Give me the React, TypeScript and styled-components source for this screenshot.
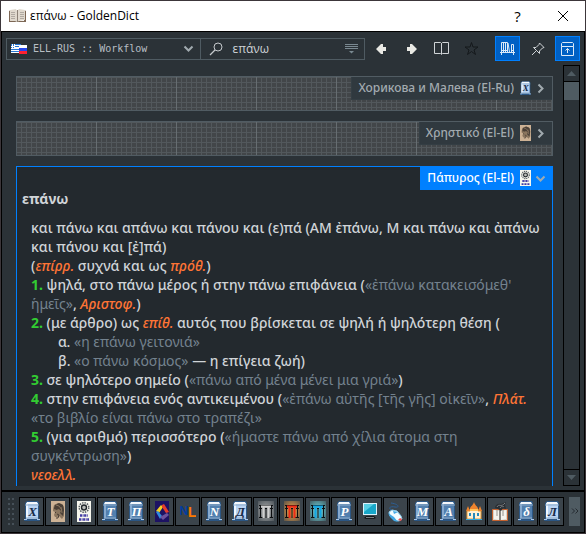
import React from "react";
import styled, { createGlobalStyle, css } from "styled-components";

const Global = createGlobalStyle`
  * { box-sizing: border-box; }
  body { margin: 0; background: #2b3237; }
  button, input, select { font: inherit; margin: 0; padding: 0; border: 0; color: inherit; background: none; border-radius: 0; }
  svg { display: block; flex: none; }
`;

const Window = styled.div`
  height: 100vh;
  display: flex;
  flex-direction: column;
  border: 1px solid #3c363a;
  background: #2b3237;
  color: #d0d4d8;
  font: 12px/16px "Open Sans", "Noto Sans", sans-serif;
`;

const TitleBar = styled.header`
  display: flex;
  align-items: center;
  height: 30px;
  flex: none;
  padding: 0 0 0 8px;
  background: #fff;
  color: #000;
`;

const Title = styled.h1`
  flex: 1;
  margin: 0 0 0 4px;
  font: inherit;
`;

const TitleButton = styled.button`
  width: 45px;
  height: 30px;
  display: grid;
  place-items: center;
  font-size: 15px;
`;

const Frame = styled.main`
  flex: 1;
  min-height: 0;
  display: flex;
  flex-direction: column;
  border: 1px solid #000;
`;

const Toolbar = styled.div`
  display: flex;
  align-items: center;
  flex: none;
  height: 33px;
  padding: 0 4px;
`;

const Field = styled.label<{ $share: number }>`
  flex: ${(p) => p.$share} 1 ${(p) => p.$share}px;
  min-width: 0;
  height: 22px;
  display: flex;
  align-items: center;
  border: 1px solid #4f5b62;
  padding: 0 6px 0 4px;
  & + & { margin-left: -1px; padding-left: 8px; }
`;

const GroupSelect = styled.select`
  flex: 1;
  min-width: 0;
  height: 18px;
  padding-left: 6px;
  appearance: none;
  outline: 0;
  color: #b7bec3;
  font: 10px/18px "DejaVu Sans Mono", monospace;
`;

const SearchInput = styled.input`
  flex: 1;
  min-width: 0;
  height: 20px;
  padding-left: 8px;
  outline: 0;
`;

const ToolButtons = styled.div`
  display: flex;
  flex: none;
  gap: 5px;
  margin-left: 4px;
`;

const ToolButton = styled.button<{ $active?: boolean }>`
  width: 25px;
  height: 25px;
  display: grid;
  place-items: center;
  border: 1px solid transparent;
  &:nth-child(5) { margin-left: 6px; }
  ${(p) => p.$active && css`
    background: #0060c4;
    border-color: #0080ff;
  `}
`;

const Workspace = styled.div`
  flex: 1;
  min-height: 0;
  display: flex;
  padding: 0 4px 4px 14px;
`;

const Articles = styled.div`
  flex: 1;
  min-width: 0;
  display: flex;
  flex-direction: column;
  gap: 10px;
  padding-top: 11px;
  overflow: hidden;
`;

const CollapsedArticle = styled.section`
  flex: none;
  height: 35px;
  display: flex;
  justify-content: flex-end;
  align-items: flex-start;
  border: 1px solid #515c63;
  background-color: #424649;
  background-image:
    linear-gradient(90deg, #666d71 1px, transparent 1px),
    linear-gradient(90deg, #52585c 1px, transparent 1px),
    linear-gradient(#52585c 1px, transparent 1px);
  background-size: 80px 80px, 5px 5px, 5px 5px;
  background-position: -1px 0, 4px 0, 0 0;
`;

const ArticleTab = styled.button<{ $open?: boolean }>`
  display: flex;
  align-items: center;
  height: 23px;
  padding: 0 6px;
  font-family: "Noto Sans", sans-serif;
  font-size: 12px;
  font-weight: 500;
  line-height: 20px;
  color: #a3abb0;
  background: #30393f;
  border: 1px solid #343e44;
  border-width: 0 0 1px 1px;
  cursor: pointer;
  & > svg:first-of-type { margin: 0 4px 0 6px; }
  ${(p) => p.$open && css`
    color: #fff;
    background: #0080ff;
    border-color: #0080ff;
  `}
`;

const OpenArticle = styled.section`
  flex: 1;
  min-height: 0;
  overflow: hidden;
  border: 1px solid #0080ff;
  border-bottom: 0;
  background: #23292e;
  font-family: "Noto Sans", sans-serif;
`;

const ArticleHeader = styled.div`
  display: flex;
  justify-content: flex-end;
`;

const Headword = styled.h2`
  margin: 0 5px;
  font-size: 14px;
  font-weight: 700;
  line-height: 17px;
`;

const ArticleBody = styled.div`
  padding: 11px 5px 0 14px;
  font-size: 14px;
  font-weight: 500;
  line-height: 19px;
`;

const Sense = styled.div<{ $sub?: boolean }>`
  margin-left: ${(p) => (p.$sub ? "27px" : "0")};
`;
const Num = styled.b`color: #32cd32;`;
const Abbr = styled.i`color: #ff7435;`;
const Quote = styled.span`
  color: #74828e;
  font-weight: 400;
`;

const ScrollBar = styled.div`
  width: 17px;
  flex: none;
  margin-left: 10px;
  display: flex;
  flex-direction: column;
  border: 1px solid #000;
`;

const ScrollButton = styled.button`
  height: 16px;
  flex: none;
  display: grid;
  place-items: center;
  &:first-child { border-bottom: 1px solid #000; }
  &:last-child { border-top: 1px solid #000; }
`;

const ScrollTrack = styled.div`flex: 1;`;
const ScrollThumb = styled.div`
  height: 18px;
  background: #4f5b62;
`;

const DictBar = styled.nav`
  flex: none;
  height: 42px;
  display: flex;
  align-items: center;
  border-top: 2px solid #000;
  padding: 0 4px 2px 6px;
`;

const Grip = styled.div`
  width: 6px;
  height: 27px;
  margin-right: 5px;
  background: conic-gradient(from 270deg at 2px 2px, #465058 90deg, transparent 0) 0 0 / 4px 5px;
`;

const DictList = styled.div`
  flex: 1;
  min-width: 0;
  display: flex;
  gap: 1px;
  overflow: hidden;
`;

const DictButton = styled.button`
  width: 25px;
  height: 29px;
  flex: none;
  display: grid;
  place-items: center;
  border: 1px solid #000;
  background: #3b444b;
`;

const MoreButton = styled.button`
  width: 11px;
  height: 29px;
  display: grid;
  place-items: center;
  background: #4f5b62;
`;

const BookIcon = ({ letter, light, small }: { letter: string; light?: boolean; small?: boolean }) => (
  <svg width={small ? 11 : 16} height={small ? 14 : 20} viewBox="0 0 16 20" aria-hidden="true">
    <path d="M1 2l2-2h11l1 2v16l1 2H0l1-2z" fill="#2b5684" />
    <path d="M2 2h12v16H2z" fill={light ? "#b9d3f2" : "#527fae"} />
    <path d="M2 3h2v14H2z" fill={light ? "#edf6ff" : "#86a9ce"} />
    <path d="M3 1h10l1 2H2z" fill="#f4f7fb" />
    <path d="M1 4h14M2 17h12" stroke="#8eacc9" />
    <path d="M0 18h3v1H0zm13 0h3v1h-3z" fill="#a9c7e9" />
    <text x="8.5" y="15" textAnchor="middle" fontFamily="Liberation Serif, serif" fontStyle="italic" fontWeight="700" fontSize="13" fill={light ? "#172b48" : "#fff"}>{letter}</text>
  </svg>
);

const PortraitIcon = ({ small }: { small?: boolean }) => (
  <svg width={small ? 11 : 14} height={small ? 16 : 21} viewBox="0 0 14 21" preserveAspectRatio="none" aria-hidden="true">
    <path d="M0 0h14v21H0z" fill="#cdb295" />
    <path d="M2 8l1-4 4-2 4 1 2 3v9l-2 3-3-3-2 1H4l-1-2 1-3-2-1z" fill="#8b765f" />
    <path d="M4 4l4-2 4 2 1 5-1 6-3-3 1-2-2-2-3 1-2-2z" fill="#4a4037" />
    <path d="M3 8l3-2 3 2M4 11l1 1M6 13l2 1-1 3H5" stroke="#4a3e35" fill="none" />
    <path d="M5 4l3 1 3 4M10 6l1 6" stroke="#8a755f" fill="none" />
  </svg>
);

const PapyrusIcon = ({ small }: { small?: boolean }) => (
  <svg width={small ? 11 : 14} height={small ? 16 : 21} viewBox="0 0 14 21" preserveAspectRatio="none" aria-hidden="true">
    <path d="M0 0h14v21H0z" fill="#f7f7ef" />
    <circle cx="7" cy="6.5" r="4.800" fill="none" stroke="#5a6064" strokeWidth="1.500" strokeDasharray="1.500 1" />
    <circle cx="7" cy="6.5" r="2.500" fill="#b9bcb8" stroke="#20262a" strokeWidth="1.400" />
    <path d="M3 14.500h8M2 18.500h10" stroke="#433ca5" strokeWidth="2.500" strokeDasharray="2 .6 1 .5" />
  </svg>
);

const GateIcon = ({ id, color, glow }: { id: string; color: string; glow: string }) => (
  <svg width="16" height="21" viewBox="0 0 16 21" aria-hidden="true">
    <radialGradient id={id} r=".75">
      <stop offset=".3" stopColor={glow} />
      <stop offset="1" stopColor={glow} stopOpacity=".15" />
    </radialGradient>
    <path d="M0 0h16v20H0z" fill={`url(#${id})`} />
    <path d="M1 4.500h14M1 7.500h3M12 7.500h3M2.500 4v13M13.500 4v13M1 16.500h4M11 16.500h4M8 8v9" stroke="#0c0e10" fill="none" />
    <path d="M3 5.500h10M5.500 6v11M10.500 6v11" stroke={color} strokeWidth="2" fill="none" />
    <path d="M7 7.500h2" stroke="#0c0e10" />
  </svg>
);

const ColorIcon = () => (
  <svg width="14" height="21" viewBox="0 0 14 21" aria-hidden="true">
    <path d="M0 0h14v21H0z" fill="#1d1263" />
    <path d="M1 10l5-6 2 2-4 6z" fill="#f4cf23" />
    <path d="M7 4l2-1 5 8-3 1-4-6z" fill="#e63c2d" />
    <path d="M1 11l2-1 4 5-2 3z" fill="#2e8be0" />
    <path d="M5 16l7-4 2 2-6 5z" fill="#6c529d" />
  </svg>
);

const NLIcon = () => (
  <svg width="16" height="16" viewBox="0 0 16 16" aria-hidden="true">
    <text x="-1" y="12" fontFamily="Liberation Sans, sans-serif" fontWeight="700" fontSize="13" fill="#063c9d">N</text>
    <text x="8" y="14" fontFamily="Liberation Sans, sans-serif" fontWeight="700" fontSize="14" fill="#ff7900">L</text>
  </svg>
);

const ComputerIcon = () => (
  <svg width="14" height="17" viewBox="0 0 14 17" aria-hidden="true">
    <path d="M0 0h14v12H0z" fill="#d9f2fb" />
    <path d="M1 1h12v10H1z" fill="#18a7c9" />
    <path d="M1 1h10L1 9z" fill="#58d0e4" />
    <path d="M3 13h8l2 2-2 1H3l-2-1z" fill="#16191c" />
    <path d="M3 14.500h8" stroke="#777c80" />
  </svg>
);

const MouseIcon = () => (
  <svg width="17" height="21" viewBox="0 0 17 21" aria-hidden="true">
    <path d="M6 10C0 7 3 5 8 6s4-3-4-4" fill="none" stroke="#2c5f96" />
    <path d="M2 11l3-2 5 1 4 5 1 3-3 2-5-1-4-4z" fill="#f1fbff" stroke="#8bcbed" />
    <path d="M1 12l2 4 4 4 4 1-4-5zM6 10l1 3 4-2" fill="#43a8e4" />
    <path d="M13 17l2 1-1 2-3-1z" fill="#e95555" />
  </svg>
);

const CastleIcon = () => (
  <svg width="16" height="19" viewBox="0 0 16 19" aria-hidden="true">
    <path d="M1 9h3V7h8v2h3v8H1z" fill="#fff0d5" stroke="#e79b37" />
    <path d="M4 7c0-3 3-3 4-7 1 4 4 4 4 7zM0 9l2-5 2 5zm12 0l2-5 2 5z" fill="#ef842d" />
    <path d="M4 7h8v2H4z" fill="#ffc25c" />
    <path d="M3 11h2v3H3zm8 0h2v3h-2zm-4 0h2v6H7z" fill="#2789b9" />
    <path d="M0 17.500h16" stroke="#34a5d9" />
  </svg>
);

const OpenBookIcon = () => (
  <svg width="16" height="21" viewBox="0 0 16 21" aria-hidden="true">
    <path d="M.5 8.500h15v11h-15z" fill="#d8d2c8" stroke="#c5622f" />
    <path d="M2 9l5 1v9l-5-1zM14 9l-5 1v9l5-1z" fill="#f6f4ef" />
    <path d="M8 9v10" stroke="#3b3e40" />
    <path d="M5 9v6M11 9v6" stroke="#96938d" />
    <path d="M3 7c0-3 3-5 6-4l5-2-1 3 1 4-3-1-2 3-3-2z" fill="#2a2e32" />
    <path d="M5 6c2-4 4 1 8-4M8 7c2-3 3 0 4-2" fill="none" stroke="#7b8085" />
  </svg>
);

const AppIcon = () => (
  <svg width="17" height="14" viewBox="0 0 17 14" aria-hidden="true">
    <path d="M0 2l2-1v10h6l1 1h6V1l2 1v11H0z" fill="#7d6755" />
    <path d="M1 1l6-1 1 2 2-2 6 1v10l-6 1-2 1-2-1H1z" fill="#e0d9ce" />
    <path d="M8.500 1v12" stroke="#8c8176" />
    <path d="M2 3.500h4M2 5.500h4M2 7.500h4M2 9.500h4M11 3.500h4M11 5.500h4M11 7.500h4M11 9.500h4" stroke="#b1aaa2" />
  </svg>
);

const FlagIcon = () => (
  <svg width="16" height="12" viewBox="0 0 16 12" shapeRendering="crispEdges" aria-hidden="true">
    <path d="M0 1h10v9H0z" fill="#fff" />
    <path d="M0 1h3v4H0zM4 1h6v1H4zM4 3h6v1H4zM0 6h10v1H0zM0 8h10v1H0z" fill="#2878d4" />
    <path d="M0 3h4v1H0zM1 1h1v5H1z" fill="#fff" />
    <path d="M8 2h8v3H8z" fill="#fff" />
    <path d="M8 5h8v3H8z" fill="#2446ed" />
    <path d="M8 8h8v3H8z" fill="#ff2131" />
  </svg>
);

const Chevron = ({ right }: { right?: boolean }) => (
  <svg width="11" height="11" viewBox="0 0 11 11" aria-hidden="true">
    <path d={right ? "M3.5 1.5l4 4-4 4" : "M1.5 3.5l4 4 4-4"} stroke="#a1aaaf" strokeWidth="2" fill="none" />
  </svg>
);

const SearchIcon = () => (
  <svg width="15" height="14" viewBox="0 0 15 14" fill="none" stroke="#c5c9cc" aria-hidden="true">
    <circle cx="9" cy="5" r="4" /><path d="M6 8l-5 5" strokeWidth="1.300" />
  </svg>
);

const ListIcon = () => (
  <svg width="13" height="10" viewBox="0 0 13 10" aria-hidden="true">
    <path d="M0 .5h13M0 2.5h13M0 4.5h13" stroke="#7a8991" /><path d="M4 7h5L6.500 9.500z" fill="#7a8991" />
  </svg>
);

const Arrow = ({ right }: { right?: boolean }) => (
  <svg width="11" height="12" viewBox="0 0 11 12" aria-hidden="true">
    <path d={right ? "M11 6L6 1H4v3H1v4h3v3h2z" : "M0 6l5-5h2v3h3v4H7v3H5z"} fill="#e9e9e4" />
  </svg>
);

const ReadIcon = () => (
  <svg width="15" height="13" viewBox="0 0 15 13" fill="none" stroke="#d0d4d7" aria-hidden="true">
    <path d="M.5 .5h6l1 1 1-1h6v11h-6l-1 1-1-1h-6zM7.500 1v11" />
  </svg>
);

const StarIcon = () => (
  <svg width="15" height="15" viewBox="0 0 15 15" fill="none" stroke="#14181b" aria-hidden="true">
    <path d="M7.500 1.500L9 6h5l-4 3 1.500 4.500-4-3-4 3L5 9 1 6h5z" />
  </svg>
);

const ShelfIcon = () => (
  <svg width="15" height="13" viewBox="0 0 15 13" fill="none" stroke="#dce9f7" aria-hidden="true">
    <path d="M1.500 10V.5h6V10M3.500 .5V10M5.500 .5V10M8 1l1.500 9M11.500 10V2.500h2V10M0 10.500h15M1.500 11v2M13.500 11v2M2 8.500h5M12 8.500h1" />
  </svg>
);

const PinIcon = () => (
  <svg width="14" height="14" viewBox="0 0 14 14" fill="none" stroke="#d0d4d7" aria-hidden="true">
    <path d="M8.500 1l4.500 4.500-1.500.5-3 3v2.500l-6-6H5l3-3zM5.500 8.500L1 13" />
  </svg>
);

const PopupIcon = () => (
  <svg width="13" height="14" viewBox="0 0 13 14" fill="none" stroke="#dce9f7" aria-hidden="true">
    <path d="M.5 4.500v-3l1-1h10l1 1v3zM.5 4.500v9h12v-9M6.500 11V6.500M4.500 8.500l2-2 2 2" />
  </svg>
);

const dictionaries: { name: string; icon: React.ReactNode }[] = [
  { name: "Хорикова и Малева", icon: <BookIcon letter="X" light /> },
  { name: "Χρηστικό", icon: <PortraitIcon /> },
  { name: "Πάπυρος", icon: <PapyrusIcon /> },
  { name: "Τ", icon: <BookIcon letter="T" /> },
  { name: "Π", icon: <BookIcon letter="Π" /> },
  { name: "Color", icon: <ColorIcon /> },
  { name: "NL", icon: <NLIcon /> },
  { name: "N", icon: <BookIcon letter="N" /> },
  { name: "Д", icon: <BookIcon letter="Д" light /> },
  { name: "Π grey", icon: <GateIcon id="gate-grey" color="#d0d0d0" glow="#8f9294" /> },
  { name: "Π red", icon: <GateIcon id="gate-red" color="#f02b16" glow="#c78a45" /> },
  { name: "Π blue", icon: <GateIcon id="gate-blue" color="#13a7e5" glow="#62b4bc" /> },
  { name: "P", icon: <BookIcon letter="P" /> },
  { name: "Computer", icon: <ComputerIcon /> },
  { name: "Mouse", icon: <MouseIcon /> },
  { name: "M", icon: <BookIcon letter="M" /> },
  { name: "A", icon: <BookIcon letter="A" /> },
  { name: "Castle", icon: <CastleIcon /> },
  { name: "Open book", icon: <OpenBookIcon /> },
  { name: "δ", icon: <BookIcon letter="δ" /> },
  { name: "Л", icon: <BookIcon letter="Л" light /> },
];

export default function App() {
  return (
    <>
      <Global />
      <Window>
        <TitleBar>
          <AppIcon />
          <Title>επάνω - GoldenDict</Title>
          <TitleButton aria-label="Help">?</TitleButton>
          <TitleButton aria-label="Close">
            <svg width="12" height="12" viewBox="0 0 12 12"><path d="M1 1l10 10M11 1L1 11" stroke="#000" /></svg>
          </TitleButton>
        </TitleBar>
        <Frame>
          <Toolbar>
            <Field $share={196}>
              <FlagIcon />
              <GroupSelect aria-label="Dictionary group"><option>ELL-RUS :: Workflow</option></GroupSelect>
              <Chevron />
            </Field>
            <Field $share={165}>
              <SearchIcon />
              <SearchInput aria-label="Search" defaultValue="επάνω" />
              <ListIcon />
            </Field>
            <ToolButtons>
              <ToolButton aria-label="Back"><Arrow /></ToolButton>
              <ToolButton aria-label="Forward"><Arrow right /></ToolButton>
              <ToolButton aria-label="Found in dictionaries"><ReadIcon /></ToolButton>
              <ToolButton aria-label="Favorite"><StarIcon /></ToolButton>
              <ToolButton aria-label="Dictionary bar" aria-pressed="true" $active><ShelfIcon /></ToolButton>
              <ToolButton aria-label="Pin"><PinIcon /></ToolButton>
              <ToolButton aria-label="On top" aria-pressed="true" $active><PopupIcon /></ToolButton>
            </ToolButtons>
          </Toolbar>
          <Workspace>
            <Articles>
              <CollapsedArticle>
                <ArticleTab>Хорикова и Малева (El-Ru)<BookIcon letter="X" light small /><Chevron right /></ArticleTab>
              </CollapsedArticle>
              <CollapsedArticle>
                <ArticleTab>Χρηστικό (El-El)<PortraitIcon small /><Chevron right /></ArticleTab>
              </CollapsedArticle>
              <OpenArticle>
                <ArticleHeader>
                  <ArticleTab $open>Πάπυρος (El-El)<PapyrusIcon small /><Chevron /></ArticleTab>
                </ArticleHeader>
                <Headword>επάνω</Headword>
                <ArticleBody>
                  <Sense>και πάνω και απάνω και πάνου και (ε)πά (ΑΜ ἐπάνω, Μ και πάνω και ἀπάνω και πάνου και [ἐ]πά)</Sense>
                  <Sense>(<Abbr>επίρρ.</Abbr> συχνά και ως <Abbr>πρόθ.</Abbr>)</Sense>
                  <Sense><Num>1.</Num> ψηλά, στο πάνω μέρος ή στην πάνω επιφάνεια (<Quote>«ἐπάνω κατακεισόμεθ' ἡμεῖς»</Quote>, <Abbr>Αριστοφ.</Abbr>)</Sense>
                  <Sense><Num>2.</Num> (με άρθρο) ως <Abbr>επίθ.</Abbr> αυτός που βρίσκεται σε ψηλή ή ψηλότερη θέση (</Sense>
                  <Sense $sub>α. <Quote>«η επάνω γειτονιά»</Quote></Sense>
                  <Sense $sub>β. <Quote>«ο πάνω κόσμος»</Quote> — η επίγεια ζωή)</Sense>
                  <Sense><Num>3.</Num> σε ψηλότερο σημείο (<Quote>«πάνω από μένα μένει μια γριά»</Quote>)</Sense>
                  <Sense><Num>4.</Num> στην επιφάνεια ενός αντικειμένου (<Quote>«ἐπάνω αὐτῆς [τῆς γῆς] οἰκεῖν»</Quote>, <Abbr>Πλάτ.</Abbr> <Quote>«το βιβλίο είναι πάνω στο τραπέζι»</Quote></Sense>
                  <Sense><Num>5.</Num> (για αριθμό) περισσότερο (<Quote>«ήμαστε πάνω από χίλια άτομα στη συγκέντρωση»</Quote>)</Sense>
                  <Sense><Abbr>νεοελλ.</Abbr></Sense>
                </ArticleBody>
              </OpenArticle>
            </Articles>
            <ScrollBar>
              <ScrollButton aria-label="Scroll up">
                <svg width="9" height="5" viewBox="0 0 9 5"><path d="M0 5l4.500-5L9 5z" fill="#4f5b62" /></svg>
              </ScrollButton>
              <ScrollTrack><ScrollThumb /></ScrollTrack>
              <ScrollButton aria-label="Scroll down">
                <svg width="9" height="5" viewBox="0 0 9 5"><path d="M0 0l4.500 5L9 0z" fill="#4f5b62" /></svg>
              </ScrollButton>
            </ScrollBar>
          </Workspace>
          <DictBar aria-label="Dictionaries">
            <Grip />
            <DictList>
              {dictionaries.map((d) => (
                <DictButton key={d.name} aria-label={d.name}>{d.icon}</DictButton>
              ))}
            </DictList>
            <MoreButton aria-label="More dictionaries">
              <svg width="8" height="6" viewBox="0 0 8 6" fill="none" stroke="#252b30"><path d="M1 .5L3.500 3 1 5.500M4.500 .5L7 3 4.500 5.500" /></svg>
            </MoreButton>
          </DictBar>
        </Frame>
      </Window>
    </>
  );
}
